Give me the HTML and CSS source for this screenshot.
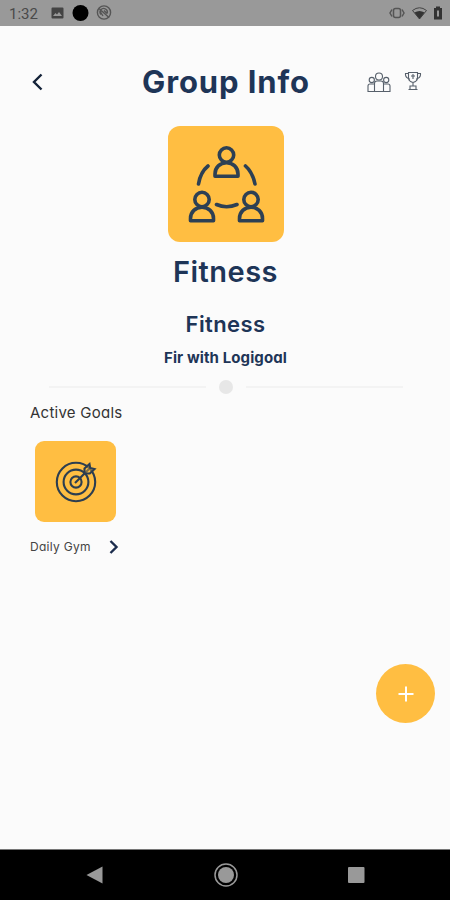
FILE: index.html
```html
<!doctype html>
<html lang="en">
<head>
	<meta charset="utf-8">
	<title>Group Info</title>
	<link rel="stylesheet" href="styles.css">
</head>
<body>
	<div class="status-bar">
		<span class="time">1:32</span>
		<svg class="status-left" width="62" height="18" viewBox="50 4.500 62 18">
			<path fill="#444" fill-rule="evenodd" d="M52.500 8h10q1 0 1 1v9q0 1-1 1h-10q-1 0-1-1V9q0-1 1-1zM53 16.500h9l-3-4-2 2.500-1.500-1.500z"/>
			<circle cx="80.500" cy="13.500" r="8" fill="#000"/>
			<g fill="none" stroke="#555" stroke-width="1.400">
				<circle cx="104" cy="13" r="6.600"/>
				<path d="M99 9l10 9M101 15a3.600 3.600 0 1 1 6-1M103 16.500l-2.500-4M104 11l3 3"/>
			</g>
		</svg>
		<svg class="status-right" width="60" height="18" viewBox="386 4.500 60 18">
			<g fill="none" stroke="#555" stroke-width="1.500">
				<rect x="393.500" y="9" width="7" height="9" rx="2"/>
				<path d="M392 10l-2 3.500 2 3.500M402 10l2 3.500-2 3.500"/>
			</g>
			<path fill="none" stroke="#444" d="M412.500 11q7-5.500 14 0l-7 8.500z"/>
			<path fill="#333" d="M414.500 13q5-3 10 0l-5 6.500z"/>
			<path fill="#333" fill-rule="evenodd" d="M434 8.500h2V7h4v1.500h2V20h-8zM437 11v6h2v-6z"/>
		</svg>
	</div>

	<div class="screen">
		<div class="header">
			<svg class="back" width="14" height="20" viewBox="0 0 14 20"><path d="M11.500 2.500L4 10l7.500 7.500"/></svg>
			<h1>Group Info</h1>
			<div class="actions">
				<!-- members -->
				<svg width="24" height="22" viewBox="367 70.500 24 22">
					<circle cx="379" cy="76" r="3.500"/>
					<circle cx="371.800" cy="79.500" r="2.600"/>
					<circle cx="386.200" cy="79.500" r="2.600"/>
					<path d="M374.500 91V83q0-2.500 2.500-2.500h4q2.500 0 2.500 2.500v8zM374.500 83.500H370q-2 0-2 2V91h6.500M383.500 83.500h4.500q2 0 2 2V91h-6.500"/>
				</svg>
				<!-- trophy -->
				<svg width="18" height="20" viewBox="404 72 18 20">
					<path d="M408.500 72.500h9v5q0 4-4.500 5-4.500-1-4.500-5zM408.500 73.500H405.500q-.5 4.500 4.500 5.500M417.500 73.500h3q.5 4.500-4.500 5.500M411 76h4M413 74v5M413 82.500V86M410 86h6v3.500h-6zM408.500 89.500h9"/>
				</svg>
			</div>
		</div>

		<div class="group-logo">
			<svg width="80" height="80" viewBox="-.5 -2 80 80">
				<defs>
					<g id="person">
						<circle cx="0" cy="7.500" r="7.200"/>
						<path d="M-11.500 28.800v-2.300c0-6.500 5-11.300 11.500-11.300s11.500 4.800 11.500 11.300v2.300z"/>
					</g>
				</defs>
				<use href="#person" x="40" y="1.500"/>
				<use href="#person" x="15.500" y="46"/>
				<use href="#person" x="64.500" y="46"/>
				<path d="M21.500 20Q14 26 12 38M59 20q7 6 9.500 18M30 58.500q10 4.500 20.500 0" stroke-linecap="round"/>
			</svg>
		</div>

		<h2>Fitness</h2>
		<h3>Fitness</h3>
		<p class="description">Fir with Logigoal</p>

		<div class="divider"><span class="line"></span><span class="dot"></span><span class="line"></span></div>

		<h4>Active Goals</h4>
		<div class="goal">
			<div class="goal-icon">
				<svg width="44" height="44" viewBox="0 0 44 44">
					<circle cx="22" cy="22" r="19.200"/>
					<circle cx="22" cy="22" r="12.400"/>
					<circle cx="22" cy="22" r="5.600"/>
					<path d="M21 23L35.500 8.500"/>
					<path class="fletching" d="M30.500 13.500v-5l5-4.500.7 4 4.300 1-4.700 4.500z"/>
				</svg>
			</div>
			<div class="goal-row">
				<span>Daily Gym</span>
				<svg width="10" height="16" viewBox="0 0 10 16"><path d="M1.500 2l6 6-6 6"/></svg>
			</div>
		</div>
	</div>

	<div class="add-button">
		<svg width="16" height="16" viewBox="0 0 16 16"><path d="M8 .5v15M.5 8h15"/></svg>
	</div>

	<div class="nav-bar">
		<svg width="26" height="26" viewBox="0 0 26 26"><path fill="#999" d="M4.500 13L20.500 4.500v17z"/></svg>
		<svg width="26" height="26" viewBox="0 0 26 26"><circle cx="13" cy="13" r="11" fill="none" stroke="#999" stroke-width="1.500"/><circle cx="13" cy="13" r="8" fill="#999"/></svg>
		<svg width="26" height="26" viewBox="0 0 26 26"><rect x="5" y="5" width="16.500" height="16" rx="1" fill="#999"/></svg>
	</div>
</body>
</html>
```

FILE: styles.css
```css
* { box-sizing: border-box; }
body {
  margin: 0;
  height: 900px;
  display: flex;
  flex-direction: column;
  background: #fbfbfb;
  color: #1e3557;
  font-family: Inter, "Open Sans", sans-serif;
  font-feature-settings: "cv11";
  overflow: hidden;
}
svg { display: block; flex: none; }
h1, h2, h3, h4, p { margin: 0; white-space: nowrap; }

/* Android status bar */
.status-bar {
  display: flex;
  align-items: center;
  height: 26px;
  padding: 0 4px 0 9px;
  background: #999;
}
.time {
  width: 41px;
  font: 15px/26px Roboto, sans-serif;
  color: #4a4a4a;
  padding-top: 2px;
}
.status-right { margin-left: auto; }

.screen {
  flex: 1;
  display: flex;
  flex-direction: column;
  align-items: center;
}

.header {
  display: grid;
  grid-template-columns: 1fr auto 1fr;
  align-items: center;
  width: 100%;
  height: 60px;
  margin-top: 26px;
  padding: 0 28px 0 30px;
}
.back { fill: none; stroke: #142238; stroke-width: 2.4; }
h1 {
  font-size: 31px;
  line-height: 58px;
  font-weight: 700;
  letter-spacing: .9px;
}
.actions {
  display: flex;
  justify-content: flex-end;
  align-items: center;
  gap: 13px;
  fill: none;
  stroke: #57606b;
  stroke-width: 1.1;
}

.group-logo {
  display: flex;
  align-items: center;
  justify-content: center;
  width: 116px;
  height: 116px;
  margin-top: 14px;
  margin-left: 1px;
  border-radius: 12px;
  background: #ffbe42;
  fill: none;
  stroke: #2d4054;
  stroke-width: 3.6;
  stroke-linejoin: round;
}

h2 {
  margin: 10px 0 0 1px;
  font-size: 29px;
  line-height: 40px;
  font-weight: 600;
  letter-spacing: .5px;
}
h3 {
  margin: 17px 0 0 1px;
  font-size: 22px;
  line-height: 30px;
  font-weight: 600;
  letter-spacing: .4px;
}
.description {
  margin: 8px 0 0 1px;
  font-size: 15px;
  line-height: 21px;
  font-weight: 700;
  letter-spacing: .1px;
}

.divider {
  display: flex;
  align-items: center;
  gap: 13px;
  width: 354px;
  height: 14px;
  margin: 12px 0 9px 2px;
}
.line { flex: 1; height: 2px; background: #f3f3f3; }
.dot { width: 14px; height: 14px; border-radius: 50%; background: #e7e7e7; }

h4 {
  align-self: flex-start;
  margin-left: 30px;
  font-size: 15px;
  line-height: 20px;
  font-weight: 400;
  letter-spacing: .25px;
  color: #333;
}

.goal { align-self: flex-start; margin: 18px 0 0 30px; }
.goal-icon {
  display: flex;
  align-items: center;
  justify-content: center;
  width: 81px;
  height: 81px;
  margin-left: 5px;
  border-radius: 9px;
  background: #ffbe42;
  fill: none;
  stroke: #2d3e50;
  stroke-width: 2.1;
}
.fletching { fill: #ffbe42; fill-opacity: .4; }
.goal-row {
  display: flex;
  align-items: center;
  justify-content: space-between;
  width: 89px;
  height: 20px;
  margin-top: 15px;
  font-size: 12px;
  line-height: 18px;
  letter-spacing: .3px;
  color: #444;
  white-space: nowrap;
}
.goal-row span { padding-bottom: 1px; }
.goal-row svg { fill: none; stroke: #1b2c4c; stroke-width: 2.4; }

/* floats over the page content */
.add-button {
  position: absolute;
  right: 15px;
  bottom: 177px;
  display: flex;
  align-items: center;
  justify-content: center;
  width: 59px;
  height: 59px;
  border-radius: 50%;
  background: #ffbe42;
  stroke: #fff;
  stroke-width: 2;
}

.nav-bar {
  display: flex;
  align-items: center;
  justify-content: space-between;
  height: 51px;
  padding: 0 81px 0 82px;
  border-top: 1px solid #777;
  background: #000;
}
```
